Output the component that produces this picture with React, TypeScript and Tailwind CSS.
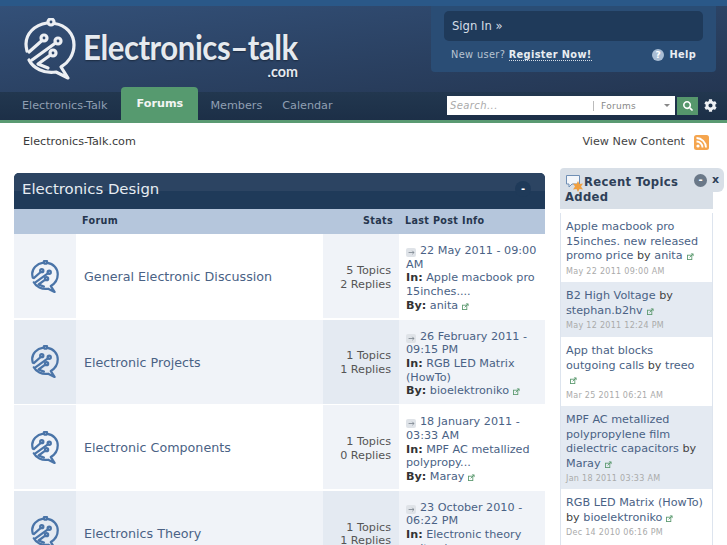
import { FaCog, FaSearch } from 'react-icons/fa';

const forums = [
  { name: 'General Electronic Discussion', topics: '5 Topics', replies: '2 Replies', date: '22 May 2011 - 09:00 AM', topic: 'Apple macbook pro 15inches....', by: 'anita' },
  { name: 'Electronic Projects', topics: '1 Topics', replies: '1 Replies', date: '26 February 2011 - 09:15 PM', topic: 'RGB LED Matrix (HowTo)', by: 'bioelektroniko' },
  { name: 'Electronic Components', topics: '1 Topics', replies: '0 Replies', date: '18 January 2011 - 03:33 AM', topic: 'MPF AC metallized polypropy...', by: 'Maray' },
  { name: 'Electronics Theory', topics: '1 Topics', replies: '1 Replies', date: '23 October 2010 - 06:22 PM', topic: 'Electronic theory guitar /', by: 'admin' },
];

const recent = [
  { title: 'Apple macbook pro 15inches. new released promo price', by: 'anita', date: 'May 22 2011 09:00 AM', h: 'h-[69px]' },
  { title: 'B2 High Voltage', by: 'stephan.b2hv', date: 'May 12 2011 12:24 PM', h: 'h-[55px]' },
  { title: 'App that blocks outgoing calls', by: 'treeo', date: 'Mar 25 2011 06:21 AM', h: 'h-[69px]' },
  { title: 'MPF AC metallized polypropylene film dielectric capacitors', by: 'Maray', date: 'Jan 18 2011 03:33 AM', h: 'h-[83px]' },
  { title: 'RGB LED Matrix (HowTo)', by: 'bioelektroniko', date: 'Dec 14 2010 06:16 PM', h: 'h-[56px]' },
];

function ChatLogo({ className, color, sw }: { className: string; color: string; sw: number }) {
  return (
    <svg viewBox="4 8 54 62" className={className} fill="none" stroke={color} strokeWidth={sw} strokeLinecap="round" strokeLinejoin="round">
      <circle cx="31" cy="12" r="3" />
      <path d="M34.5 13.5C46 15 54 24 54 35C54 45 48 53 41 57L48 68L36 62C24 64 13 58 9 50" />
      <path d="M27 13C14 15 6 24 6 34C6 37 6.5 39 7 41" />
      <circle cx="24" cy="28" r="3" />
      <path d="M22 30.5L9 42" />
      <circle cx="38" cy="31" r="3" />
      <path d="M35.5 33L12 50" />
      <circle cx="33" cy="43" r="3" />
      <path d="M30.5 45L18 54L28 58" />
    </svg>
  );
}

function ExtLink() {
  return (
    <svg viewBox="0 0 8 8" className="inline-block w-[7px] h-[7px] ml-[4px] align-[-1px]" fill="none" stroke="#5d9a70" strokeWidth="1">
      <rect x="0.5" y="2.5" width="5" height="5" />
      <path d="M3 5L7 1M4.5 1H7V3.5" />
    </svg>
  );
}

function ArrowBox() {
  return (
    <span className="inline-flex items-center justify-center w-[10px] h-[9px] mr-[4px] rounded-[2px] bg-[#dfe3e8] align-[-1px]">
      <svg viewBox="0 0 8 6" className="w-[7px] h-[5px]" fill="none" stroke="#7d8590" strokeWidth="1">
        <path d="M0.5 3H7M5 1L7 3L5 5" />
      </svg>
    </span>
  );
}

function RssIcon() {
  return (
    <svg viewBox="0 0 15 15" className="w-[15px] h-[15px]">
      <rect width="15" height="15" rx="2.5" fill="#f5a54e" />
      <circle cx="4" cy="11" r="1.6" fill="#fff" />
      <path d="M2.5 6.5A6 6 0 0 1 8.5 12.5M2.5 3A9.5 9.5 0 0 1 12 12.5" fill="none" stroke="#fff" strokeWidth="1.8" />
    </svg>
  );
}

function SidebarIcon() {
  return (
    <svg viewBox="0 0 20 18" className="w-[20px] h-[18px] shrink-0">
      <path d="M1.5 1.5H14.5V10H7L4 13V10H1.5Z" fill="#f3f6fa" stroke="#6f8fb5" strokeWidth="1" />
      <path d="M13 7L14.5 10L18 9.5L16 12.5L18 15.5L14.5 15L13 18L11.5 15L8 15.5L10 12.5L8 9.5L11.5 10Z" fill="#f0a040" />
    </svg>
  );
}

export default function App() {
  return (
    <div className="w-[727px] h-[545px] overflow-hidden bg-white text-[11.2px] text-[#444] font-['DejaVu_Sans',Verdana,sans-serif]">
      {/* header */}
      <div className="h-[92px] bg-gradient-to-br from-[#335078] to-[#243652] border-t-[6px] border-[#2a5888] flex justify-between">
        <div className="pl-[20px] pt-[4px] flex">
          <ChatLogo color="#eceff3" sw={3.2} className="w-[54px] h-[62px] ml-[4px] mt-[8px] shrink-0" />
          <div className="ml-[5px] pt-[17px] leading-[38px] text-[35px] font-bold tracking-[-0.5px] text-[#e6eaef] font-['Lato',sans-serif] whitespace-nowrap origin-left scale-x-[0.89] [text-shadow:0_1px_2px_rgba(0,0,0,0.4)]">
            Electronics–talk
            <div className="text-right text-[16px] leading-[11px] font-bold tracking-normal">.com</div>
          </div>
        </div>
        <div className="w-[285px] h-[66px] mr-[11px] bg-[#2a4d75] rounded-b-[4px] px-[13px] pt-[5px]">
          <div className="h-[30px] rounded-[5px] bg-[#1f3a5a] pl-[8px] leading-[30px] text-[11.6px] text-[#d5dde6]">Sign In »</div>
          <div className="flex items-center justify-between mt-[7px] text-[9.8px] tracking-[0.35px]">
            <div className="text-[#b8c4d2] pl-[7px]">
              New user? <span className="font-bold text-[#e8edf2] border-b border-dotted border-[#d5dde6]">Register Now!</span>
            </div>
            <div className="flex items-center pr-[7px] font-bold text-[#e8edf2]">
              <span className="w-[12px] h-[12px] mr-[5px] rounded-full bg-[#a9bdd4] text-[9px] leading-[12px] text-center text-white">?</span>
              Help
            </div>
          </div>
        </div>
      </div>

      {/* nav */}
      <div className="h-[28px] bg-gradient-to-b from-[#22374f] to-[#1c2f47] flex relative">
        <div className="flex items-end pl-[22px] text-[#8f9fb2]">
          <div className="h-[28px] leading-[28px]">Electronics-Talk</div>
          <div className="h-[33px] w-[77px] ml-[14px] leading-[33px] text-center font-bold text-[#f2f5f3] bg-[#569a6f] rounded-t-[4px]">Forums</div>
          <div className="h-[28px] leading-[28px] ml-[12px]">Members</div>
          <div className="h-[28px] leading-[28px] ml-[20px]">Calendar</div>
        </div>
        <div className="ml-auto mr-[10px] flex items-center pb-[1px]">
          <div className="w-[228px] h-[19px] bg-white flex items-center text-[10px]">
            <span className="flex-1 pl-[3px] italic text-[#aaa] tracking-[0.4px]">Search...</span>
            <span className="w-[71px] border-l border-[#bbb] pl-[7px] leading-[10px] text-[#888] text-[9px] tracking-[0.3px]">Forums</span>
            <span className="mr-[5px] border-x-[3px] border-t-[3px] border-x-transparent border-t-[#888]" />
          </div>
          <div className="w-[21px] h-[18px] ml-[2px] bg-[#56976c] flex items-center justify-center">
            <FaSearch size={10} color="#fff" />
          </div>
          <FaCog size={13} color="#eef1f4" className="ml-[6px]" />
        </div>
      </div>
      <div className="h-[3px] bg-[#5a9a72]" />

      {/* breadcrumb */}
      <div className="h-[36px] flex items-center justify-between pl-[23px] pr-[18px] pt-[3px] text-[#3a3a3a]">
        <span>Electronics-Talk.com</span>
        <div className="flex items-center">
          <span className="mr-[9px] text-[#444]">View New Content</span>
          <RssIcon />
        </div>
      </div>

      <div className="flex pt-[9px]">
        {/* forum table */}
        <div className="w-[531px] ml-[14px] mt-[5px] shrink-0">
          <div className="h-[36px] rounded-t-[5px] bg-[#1f3a59] relative overflow-hidden">
            <div className="h-[18px] bg-[#2c4462]" />
            <div className="absolute inset-0 pl-[8px] leading-[33px] text-[14.9px] text-[#e6ecf2]">Electronics Design</div>
            <div className="absolute right-[14px] top-[8px] w-[16px] h-[16px] rounded-full bg-[#1f3a59] text-center text-[10px] leading-[15px] font-bold text-white">-</div>
          </div>
          <div className="h-[25px] bg-[#b5c6dc] flex items-center text-[9.6px] font-bold tracking-[0.35px] text-[#26364e]">
            <span className="w-[309px] pl-[68px]">Forum</span>
            <span className="w-[70px] text-right">Stats</span>
            <span className="pl-[12px]">Last Post Info</span>
          </div>
          {forums.map((f, i) => {
            const even = i % 2 === 1;
            return (
              <div key={f.name} className="flex h-[85px] mb-[0.6px] border-b border-white">
                <div className={`w-[62px] flex items-center justify-center ${even ? 'bg-[#e4eaf2]' : 'bg-[#f0f3f8]'}`}>
                  <ChatLogo color="#4a74a8" sw={4.2} className="w-[29px] h-[33px]" />
                </div>
                <div className={`w-[247px] flex items-center pl-[8px] pt-[1px] text-[12.7px] text-[#4a6285] ${even ? 'bg-[#f0f3f8]' : 'bg-white'}`}>{f.name}</div>
                <div className={`w-[76px] flex flex-col justify-center items-end pr-[8px] pt-[3px] leading-[13.7px] text-[#555] ${even ? 'bg-[#e4eaf2]' : 'bg-[#f0f3f8]'}`}>
                  <span>{f.topics}</span>
                  <span>{f.replies}</span>
                </div>
                <div className={`flex-1 pl-[7px] pr-[2px] pt-[10px] leading-[13.7px] text-[#4a6285] ${even ? 'bg-[#f0f3f8]' : 'bg-white'}`}>
                  <div><ArrowBox />{f.date}</div>
                  <div><b className="text-[#333]">In:</b> {f.topic}</div>
                  <div><b className="text-[#333]">By:</b> {f.by}<ExtLink /></div>
                </div>
              </div>
            );
          })}
        </div>

        {/* sidebar */}
        <div className="w-[153px] ml-[15px] shrink-0 relative">
          <div className="h-[41px] bg-[#d8dfe7] rounded-tl-[4px] pt-[6px] leading-[15px] text-[11.6px] font-bold tracking-[0.35px] text-[#2e4058] pl-[5px]">
            <div className="flex items-start">
              <SidebarIcon />
              <span className="ml-[-1px] mt-[1px]">Recent Topics</span>
            </div>
            <div className="-mt-[2px]">Added</div>
          </div>
          <div className="absolute top-0 left-[134px] w-[30px] h-[24px] bg-[#d8dfe7] rounded-r-[6px] flex items-center">
            <span className="w-[13px] h-[13px] rounded-full bg-[#6a7888] text-white text-[10px] font-bold leading-[12px] text-center">-</span>
            <span className="ml-[5px] text-[11px] font-bold text-[#2e4058]">x</span>
          </div>
          <div className="mt-[4px] border-x border-[#dde4ee]">
            {recent.map((r, i) => (
              <div key={r.title} className={`${r.h} pl-[5px] pr-[7px] pt-[7px] leading-[14.6px] ${i % 2 === 1 ? 'bg-[#e4eaf2]' : 'bg-white'}`}>
                <div className="text-[#4a6285]">
                  {r.title} <span className="text-[#444]">by</span> {r.by}<ExtLink />
                </div>
                <div className="mt-[2px] text-[8px] leading-[12px] tracking-[0.3px] text-[#aaa]">{r.date}</div>
              </div>
            ))}
          </div>
        </div>
      </div>
    </div>
  );
}
